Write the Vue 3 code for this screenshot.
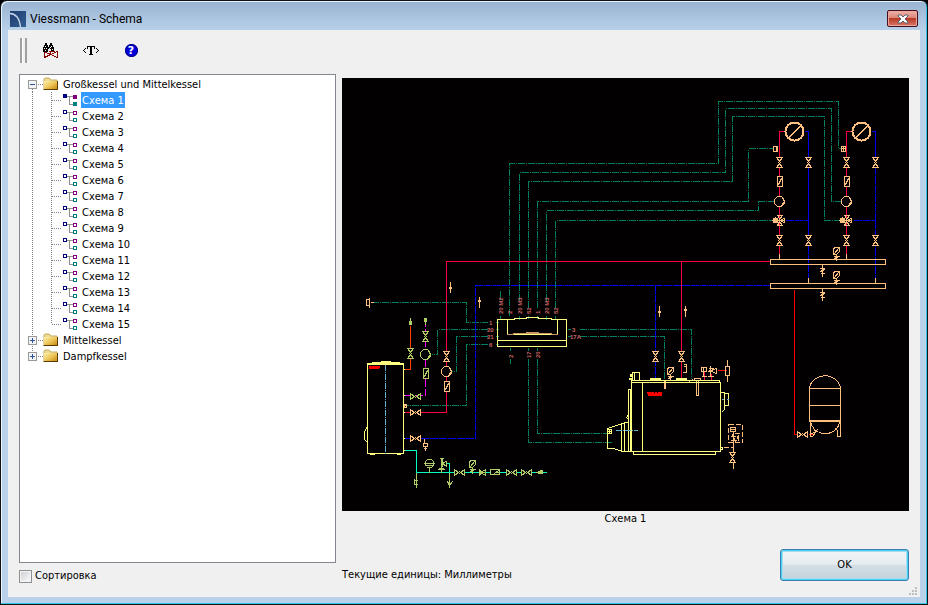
<script setup>
import { ref } from 'vue'

const roots = [
  { name: 'Großkessel und Mittelkessel', open: true, items: Array.from({ length: 15 }, (_, i) => `Схема ${i + 1}`) },
  { name: 'Mittelkessel', open: false, items: [] },
  { name: 'Dampfkessel', open: false, items: [] }
]
const selected = ref('Схема 1')
const sorted = ref(false)

const controlLines = [
  'M509 315V163H718V101H838V148H842',
  'M519 300V172H725V108H831V201H843',
  'M528 307V181H732V116H824V220H841',
  'M537 307V201H748V148H773',
  'M546 300V210H758V201H775',
  'M555 307V220H772',
  'M500 290V299M500 315V319M519 315V319M528 315V318M537 315V318M546 315V319M555 315V319',
  'M371 302H466V322H487',
  'M487 329H437V354H431',
  'M487 336H456V371H451',
  'M487 344H466V405H406',
  'M579 329H691V378',
  'M579 336H664V378',
  'M510 358V363M528 358V442H612',
  'M537 358V433H612',
  'M495 322H498M495 329H498M495 336H498M495 344H498M567 329H570M567 336H570M510 347V350M528 347V350M537 347V350'
]

const upright = [[779, 162], [808, 162], [846, 162], [875, 162], [779, 240], [808, 240], [846, 240], [875, 240], [446, 356], [655, 356], [681, 356], [732, 457]]
const flat = [[415, 412], [415, 438], [802, 434]]
const flatGreen = [[415, 396], [459, 472], [511, 472], [526, 472]]
const slashed = [[779, 181], [846, 181], [446, 386]]
const pumps = [[779, 201], [846, 201], [446, 371]]
const dials = [794, 861]
const mixers = [779, 846]
const headers = [259, 283]
const flowArrows = [
  { x: 450, y: 287, up: false },
  { x: 479, y: 302, up: true },
  { x: 659, y: 311, up: false },
  { x: 685, y: 311, up: true }
]
const sideLabels = [['1', 489, 325], ['20', 487, 332], ['21', 487, 339], ['6', 489, 347], ['3', 572, 332], ['17A', 570, 339]]
const topLabels = [['20 M2', 503], ['2', 512], ['20 M3', 522], ['52', 531], ['1', 540], ['20 M3', 549], ['52', 558]]
const bottomLabels = [['2', 513], ['17', 531], ['20', 540]]
</script>

<template>
  <div class="window">
    <header class="titlebar">
      <svg class="logo" viewBox="0 0 16 16" aria-hidden="true">
        <defs>
          <linearGradient id="logoBlue" x2="1" y2="1"><stop stop-color="#203b70" /><stop offset="1" stop-color="#315d91" /></linearGradient>
        </defs>
        <rect width="16" height="16" fill="url(#logoBlue)" />
        <path d="M0 2.5Q9 3 10.500 16" fill="none" stroke="#c5d6e8" stroke-width="1.3" />
      </svg>
      <h1>Viessmann - Schema</h1>
      <button class="close" aria-label="Close">
        <svg viewBox="0 0 12 10"><path d="M1 1H4L6 3L8 1H11V2L8 5L11 8V9H8L6 7L4 9H1V8L4 5L1 2Z" fill="#fff" stroke="#59606c" stroke-width="1" /></svg>
      </button>
    </header>

    <main class="client">
      <nav class="toolbar">
        <span class="grip"></span>
        <button class="tool" aria-label="Find">
          <svg viewBox="0 0 16 16" shape-rendering="crispEdges">
            <path d="M2 0H4V2H5V4H6V2H7V0H9V2H10V4H11V9H8V6H7V5H6V6H5V9H0V4H1V2H2Z" fill="#000" />
            <path d="M2 3.5H3M1 5.5H2M3 5.5H4M8 3.5H9M7 4.500H8M9 6.5H10M2 7.5H3" stroke="#fff" />
            <path d="M1.5 9V14.500L7.500 11.500L14.500 8.500V14.500L7.500 11.500L2 9M7.500 11V8M6 8.500H12" fill="none" stroke="#8b0000" />
          </svg>
        </button>
        <button class="tool" aria-label="Text">
          <svg viewBox="0 0 16 16" shape-rendering="crispEdges">
            <path d="M3 5L0.5 7.5L3 10M13 5L15.5 7.5L13 10" fill="none" stroke="#000" />
            <path d="M4 3H12V6H11V4H9V11H10V12H6V11H7V4H5V6H4Z" fill="#000" />
          </svg>
        </button>
        <button class="tool help" aria-label="Help"><span>?</span></button>
      </nav>

      <div class="panes">
        <section class="left">
          <ul class="tree">
            <li v-for="(root, r) in roots" :key="root.name">
              <button class="row">
                <svg class="rail-root" viewBox="0 0 23 16" shape-rendering="crispEdges" aria-hidden="true">
                  <path class="dots" :d="r === 0 ? 'M12.5 13V16' : r === 1 ? 'M12.5 0V16' : 'M12.5 0V4'" />
                  <path class="dots" d="M18 8.5H23" />
                  <rect x="8.5" y="4.5" width="8" height="8" fill="#f4f4f4" stroke="#9a9a9a" />
                  <path :d="root.open ? 'M10 8.5H15' : 'M10 8.5H15M12.5 6V11'" stroke="#3050a0" />
                </svg>
                <svg class="folder" viewBox="0 0 16 16" aria-hidden="true">
                  <defs><linearGradient id="folderGold" x2="1" y2="1"><stop stop-color="#fff0b0" /><stop offset=".45" stop-color="#efc85c" /><stop offset="1" stop-color="#c47d08" /></linearGradient></defs>
                  <path d="M1 13V3L2 2H6L8 4H14V6" fill="#eedc94" stroke="#c4aa60" />
                  <path d="M1 5H15V14H1Z" fill="url(#folderGold)" />
                  <path d="M0.5 13.5H14.5V5" fill="none" stroke="#5a3a00" />
                </svg>
                <span class="name">{{ root.name }}</span>
              </button>
              <ul v-if="root.open">
                <li v-for="(item, i) in root.items" :key="item">
                  <button class="row" :class="{ selected: selected === item }" @click="selected = item">
                    <svg class="rail-item" viewBox="0 0 42 16" shape-rendering="crispEdges" aria-hidden="true">
                      <path class="dots" d="M12.5 0V16" />
                      <path class="dots" :d="i === root.items.length - 1 ? 'M31.5 0V8' : 'M31.5 0V16'" />
                      <path class="dots" d="M32 8.5H42" />
                    </svg>
                    <svg class="node" viewBox="0 0 16 16" shape-rendering="crispEdges" aria-hidden="true">
                      <path d="M5 4.5H11M7.5 4V12.5H11" fill="none" stroke="#909090" />
                      <g :class="{ solid: selected === item }">
                        <rect class="navy" x="1.5" y="2.5" width="3" height="3" />
                        <rect class="plum" x="11.5" y="3.5" width="3" height="3" />
                        <rect class="teal" x="11.5" y="10.5" width="3" height="3" />
                      </g>
                    </svg>
                    <span class="label">{{ item }}</span>
                  </button>
                </li>
              </ul>
            </li>
          </ul>
          <label class="sort"><input v-model="sorted" type="checkbox" /><span>Сортировка</span></label>
        </section>

        <section class="right">
          <figure>
            <svg class="drawing" viewBox="342 78 567 433" role="img" :aria-label="selected" shape-rendering="crispEdges">
              <defs>
                <path id="valve" d="M-3-5H3L-1 0L3 5H-3L1 0Z" />
                <path id="valveFlat" d="M-5-3V3L0-1L5 3V-3L0 1Z" />
                <path id="slashBox" d="M-2-5H3V5H-2ZM-1 3L2-3" />
                <path id="pump" d="M-2-5H2L5-1V2L2 5H-2L-5 2V-2ZM2-5L5 0L2 4" />
                <path id="gauge" d="M-2-4H3V0L0 3H-3V-2ZM-3 3L3-4M0 3V5M-2 5H3M-2 7L2 5M0 7V9" />
                <path id="drain" d="M0 0V11M-2 3H2M-2 6L2 4M-1 8H2" />
              </defs>
              <rect x="342" y="78" width="567" height="433" fill="#020000" />
              <g transform="translate(.5 .5)" fill="none" stroke-width="1">
                <g class="control"><path v-for="d in controlLines" :key="d" :d="d" /></g>

                <g class="blue">
                  <path class="dashed" d="M770 285H475V438H404M655 285V378M785 220H808M853 220H875" />
                  <path d="M804 131H808V245M871 131H875V159" />
                  <path class="dashed" d="M808 245V278M875 166V278" />
                </g>
                <g class="crimson">
                  <path d="M770 261H446V412H404M681 261V378" />
                  <path d="M784 131H779V254M851 131H846V254" />
                  <path d="M704 372V379M711 374V379M670 374V379" />
                </g>
                <path class="red" d="M794 289V434H797M808 434H812M717 370H726" />
                <path class="flame" d="M404 369H410V325" />
                <path class="magenta" d="M404 395H425V316" />
                <path class="mint" d="M404 450H416V472H546M446 463H449V472" />

                <g class="tan">
                  <rect v-for="y in headers" :key="y" x="770" :y="y" width="115" height="5" />
                  <path d="M779 254V259M846 254V259M808 278V283M875 278V283" />
                  <g v-for="x in dials" :key="x">
                    <circle :cx="x" cy="131" r="9" fill="#020000" stroke-width="2" />
                    <path :transform="`translate(${x} 131)`" d="M-6 6L5-5M-5 6L6-5" />
                  </g>
                  <g class="masked">
                    <use v-for="([x, y], i) in upright" :key="i" href="#valve" :x="x" :y="y" />
                    <use v-for="([x, y], i) in flat" :key="i" href="#valveFlat" :x="x" :y="y" />
                    <use v-for="([x, y], i) in slashed" :key="i" href="#slashBox" :x="x" :y="y" />
                    <use v-for="([x, y], i) in pumps" :key="i" href="#pump" :x="x" :y="y" />
                  </g>
                  <g v-for="x in mixers" :key="x" :transform="`translate(${x} 220)`">
                    <path d="M-2-5H3L-1 0L3 5H-2L1 0ZM-6-2H-2V2H-6ZM-7 0H5M5-2V2L0 0L5-2M-4-3L-1 3" />
                    <path d="M-5 0H-3" stroke-width="3" />
                  </g>
                  <path d="M773 146H777V151H773ZM776 146V151M841 146H845V151H841ZM842 148H845M843 146V151" />
                  <use v-for="y in headers" :key="y" href="#gauge" x="836" :y="y - 8" />
                  <use v-for="y in headers" :key="y" href="#drain" x="822" :y="y + 6" />
                  <path d="M366 299V305H369V299ZM369 298V307M371 302H373" />
                  <path d="M404 404H406V407H404ZM404 405H406M424 439V443M423 443H427V446H423ZM425 446V450M424 448H426" />
                  <g v-for="a in flowArrows" :key="a.x" :transform="`translate(${a.x} ${a.y})`">
                    <path d="M0-5V5" />
                    <path :d="a.up ? 'M-1-1H1M-1-2H1' : 'M-1 0H1M-1 1H1'" />
                  </g>
                  <!-- expansion vessel -->
                  <path d="M809 388H840V421H809ZM809 405H840M809 420H840" />
                  <path d="M809 388C810 380 817 376 825 375C832 376 839 380 840 388M810 421C812 429 818 433 825 433C832 433 838 429 839 421M810 422V436H812L817 429M840 422V436H837V430L835 428M812 426L815 431M810 434L815 431" />
                  <!-- boiler fittings -->
                  <use href="#gauge" x="670" y="371" />
                  <path d="M684 364H686V372H683M684 366H686M664 381V388M665 381V388M689 381L692 379M694 378H700V380H694ZM696 380V395H698V380M701 367H706V371H701ZM703 368V376M702 376H706M710 366V376M709 368H713M708 371L716 368V373L709 370M708 376H713" />
                  <path d="M725 366H729V375H725ZM727 360V366M727 375V381" />
                  <path class="broken" d="M728 424H742V442H728ZM723 447H733" />
                  <path d="M730 427H735V431H730ZM731 429H734M733 431V451M732 434L735 441M731 436H735M731 440H736M735 433H739M738 435V440M737 436V438M733 462V468" />
                </g>

                <g class="olive">
                  <use href="#valve" x="410" y="353" />
                  <use href="#valve" x="425" y="336" />
                  <use href="#slashBox" x="425" y="373" />
                  <use href="#pump" x="425" y="354" />
                  <use v-for="([x, y], i) in flatGreen" :key="i" href="#valveFlat" :x="x" :y="y" />
                  <path d="M410 318V324M409 321V324M411 321V324M425 318V324M424 318V321M426 318V321" />
                  <circle cx="429" cy="463" r="4.5" />
                  <path d="M424 463H434M425 465H433M429 468V472M441 458V472M442 458V466M440 458H443M439 468H443M438 469H444M441 463L446 461V466L441 462" />
                  <use href="#gauge" x="472" y="464" />
                  <path d="M479 469V475M480 470V474M485 469L480 472L485 475V469M481 472H484M490 469H499V474H490ZM494 473L498 470M495 472H498" />
                  <path d="M416 473V487M414 479V484H417M414 480H417M414 484H417M449 473V487M447 481L449 485L452 481M536 472H542M538 471H542M540 470H542M538 473H542" />
                </g>

                <!-- storage boiler -->
                <g class="yellow">
                  <path d="M367 363H403V453H367ZM367 364H403M372 362H399M381 361H390M370 454H374M397 454H400M367 426L364 431V439L367 442M403 369H404M403 395H404M403 412H404M403 438H404M403 450H404" />
                  <path d="M497 319H514V318H526V317H538V318H551V319H566V346H497ZM497 340H566M507 319V334H557V319" />
                  <path d="M631 380H719V382M631 382H720V451H622M631 380V451M642 382V451M633 451V454H715V451M628 451V389H630V451M632 380V372H639V380M634 372V380M630 374H632M630 375H632M630 376H632M629 378H632M629 379H632" />
                  <path d="M650 378H660M650 379H660M676 378H686M676 379H686M628 422H625L607 428V448H613L622 451M621 424V451M624 422V451M628 414L626 417L628 419" />
                  <path d="M607 429H611V433H607ZM607 431H611M609 429V433M720 392H724V409L722 411M724 393H728V405H724M720 447H722V449H720" />
                </g>
                <path class="brown" d="M507 334H513M513 333H551M526 332H538M551 334H557" />
                <g class="sky"><path d="M385 364V453M615 430H637M721 399H723M726 399H728" /></g>
              </g>
              <path class="badge" d="M369 366H380V368H379V369H369ZM647 392H654V393H655V392H657V393H658V392H662V396H648V394H647Z" />
              <g class="terminals">
                <text v-for="([t, x, y]) in sideLabels" :key="t" :x="x" :y="y">{{ t }}</text>
                <text v-for="([t, x]) in topLabels" :key="x" :transform="`translate(${x} 314) rotate(-90)`">{{ t }}</text>
                <text v-for="([t, x]) in bottomLabels" :key="x" :transform="`translate(${x} 358) rotate(-90)`">{{ t }}</text>
              </g>
            </svg>
            <figcaption>{{ selected }}</figcaption>
          </figure>
          <footer>
            <p>Текущие единицы: Миллиметры</p>
            <button class="ok">OK</button>
          </footer>
        </section>
      </div>
      <svg class="sizer" viewBox="0 0 10 10" aria-hidden="true" shape-rendering="crispEdges">
        <path d="M7 0H9V2H7ZM4 3H6V5H4ZM7 3H9V5H7ZM1 6H3V8H1ZM4 6H6V8H4ZM7 6H9V8H7Z" fill="#bdbdbd" />
      </svg>
    </main>
  </div>
</template>

<style>
body {
  margin: 0;
  background: #000;
}
</style>

<style scoped>
* {
  box-sizing: border-box;
}
.window {
  min-height: 100vh;
  display: flex;
  flex-direction: column;
  padding: 0 7px 7px;
  border: 1px solid #101418;
  border-radius: 7px 7px 0 0;
  background: linear-gradient(#98b3d1, #b9d1ea 30px);
  box-shadow: inset -1px -1px #35c4e6, inset 1px 1px #eaf4fb;
  font: 11px/16px "DejaVu Sans Condensed", "DejaVu Sans", sans-serif;
  color: #000;
}
.titlebar {
  height: 29px;
  display: flex;
  align-items: center;
  gap: 4px;
  padding: 6px 2px 0;
}
.logo {
  width: 16px;
  height: 16px;
}
h1 {
  flex: 1;
  margin: 0;
  font: 12px/16px Roboto, "Noto Sans", sans-serif;
}
button {
  font: inherit;
  color: inherit;
  padding: 0;
  border: 0;
  background: none;
}
.close {
  width: 31px;
  height: 17px;
  display: grid;
  place-items: center;
  border: 1px solid #45101c;
  border-radius: 2px;
  background: linear-gradient(#eeb5ac, #dc8477 46%, #b93a25 50%, #d8786a);
  box-shadow: inset 0 0 0 1px #e9a79d;
}
.close svg {
  width: 12px;
  height: 10px;
}
.client {
  flex: 1;
  display: flex;
  flex-direction: column;
  padding: 0 11px;
  background: #f0f0f0;
}
.toolbar {
  height: 44px;
  display: flex;
  align-items: center;
  padding: 0 0 3px 1px;
}
.grip {
  width: 7px;
  height: 25px;
  margin-right: 12px;
  border: solid #a0a0a0;
  border-width: 0 2px;
  background: linear-gradient(90deg, #fff 1px, #f0f0f0 1px);
}
.tool {
  width: 24px;
  height: 24px;
  margin-right: 16px;
  display: grid;
  place-items: center;
}
.tool svg {
  width: 16px;
  height: 16px;
}
.help span {
  width: 13px;
  height: 13px;
  border-radius: 50%;
  background: #0000d8;
  box-shadow: inset 0 0 0 1px #000080;
  color: #fff;
  font: bold 11px/13px "DejaVu Sans", sans-serif;
}
.panes {
  flex: 1;
  display: grid;
  grid-template-columns: 317fr 567fr;
  gap: 6px;
}
.left,
.right {
  display: flex;
  flex-direction: column;
  min-width: 0;
}
ul {
  margin: 0;
  padding: 0;
  list-style: none;
}
.tree {
  flex: 1;
  padding-top: 1px;
  border: 1px solid #828790;
  background: #fff;
}
.row {
  width: 100%;
  height: 16px;
  display: flex;
  align-items: center;
  text-align: left;
}
.dots {
  stroke: #808080;
  stroke-dasharray: 1 1;
  fill: none;
}
.rail-root {
  width: 23px;
  height: 16px;
}
.rail-item {
  width: 42px;
  height: 16px;
}
.folder,
.node {
  width: 16px;
  height: 16px;
}
.name,
.label {
  height: 16px;
  line-height: 14px;
}
.name {
  padding: 2px 0 0 4px;
}
.label {
  margin-left: 3px;
  padding: 2px 1px 0;
}
.selected .label {
  background: #3399ff;
  color: #fff;
}
.navy {
  fill: #fff;
  stroke: #000080;
}
.plum {
  fill: #fff;
  stroke: #800080;
}
.teal {
  fill: #fff;
  stroke: #008080;
}
.solid .navy {
  fill: #000080;
}
.solid .plum {
  fill: #800080;
}
.solid .teal {
  fill: #008080;
}
.sort {
  height: 34px;
  display: flex;
  align-items: center;
  gap: 3px;
  padding-bottom: 8px;
}
.sort input {
  appearance: none;
  width: 13px;
  height: 13px;
  margin: 0;
  border: 1px solid #8e8f8f;
  background: linear-gradient(135deg, #c8ccd2, #fff);
  box-shadow: inset 0 0 0 1px #f4f4f4;
}
.sort input:checked {
  background: #3399ff;
}
figure {
  margin: 4px 0 0;
  text-align: center;
}
.drawing {
  display: block;
  width: 100%;
}
footer {
  flex: 1;
  display: flex;
  justify-content: space-between;
  align-items: flex-end;
  padding-bottom: 16px;
}
p {
  margin: 0;
  line-height: 12px;
}
.ok {
  width: 129px;
  height: 32px;
  border: 1px solid #3c7fb1;
  border-radius: 3px;
  background: linear-gradient(#f0f4f6, #e6ecf0 48%, #d5dfe5 50%, #c3d2da);
  box-shadow: inset 0 0 0 1px #48d0f4, inset 0 0 0 2px #a5def0;
}
.sizer {
  width: 10px;
  height: 10px;
  margin: -10px -9px 0 auto;
}
.control {
  stroke: #008060;
  stroke-dasharray: 7 1 1 1;
}
.blue {
  stroke: #0000f0;
}
.dashed {
  stroke-dasharray: 8 1;
}
.tan,
.olive,
.yellow,
.crimson,
.brown {
  stroke-linecap: square;
}
.crimson {
  stroke: #ff0040;
}
.red {
  stroke: #ff0000;
}
.flame {
  stroke: #ff4000;
}
.magenta {
  stroke: #ff00ff;
  stroke-dasharray: 8 2;
}
.mint {
  stroke: #00ffbf;
}
.tan {
  stroke: #ffbf7f;
}
.masked,
.olive {
  fill: #020000;
}
.broken {
  stroke-dasharray: 5 2;
  stroke-linecap: butt;
}
.olive {
  stroke: #b2cc66;
}
.yellow {
  stroke: #ffff7f;
}
.brown {
  stroke: #cc9966;
}
.sky {
  stroke: #66b2cc;
  stroke-dasharray: 6 1 1 1;
}
.badge {
  fill: #ff0000;
}
.terminals {
  fill: #cc6666;
  font: bold 6px "Liberation Sans", sans-serif;
}
</style>
